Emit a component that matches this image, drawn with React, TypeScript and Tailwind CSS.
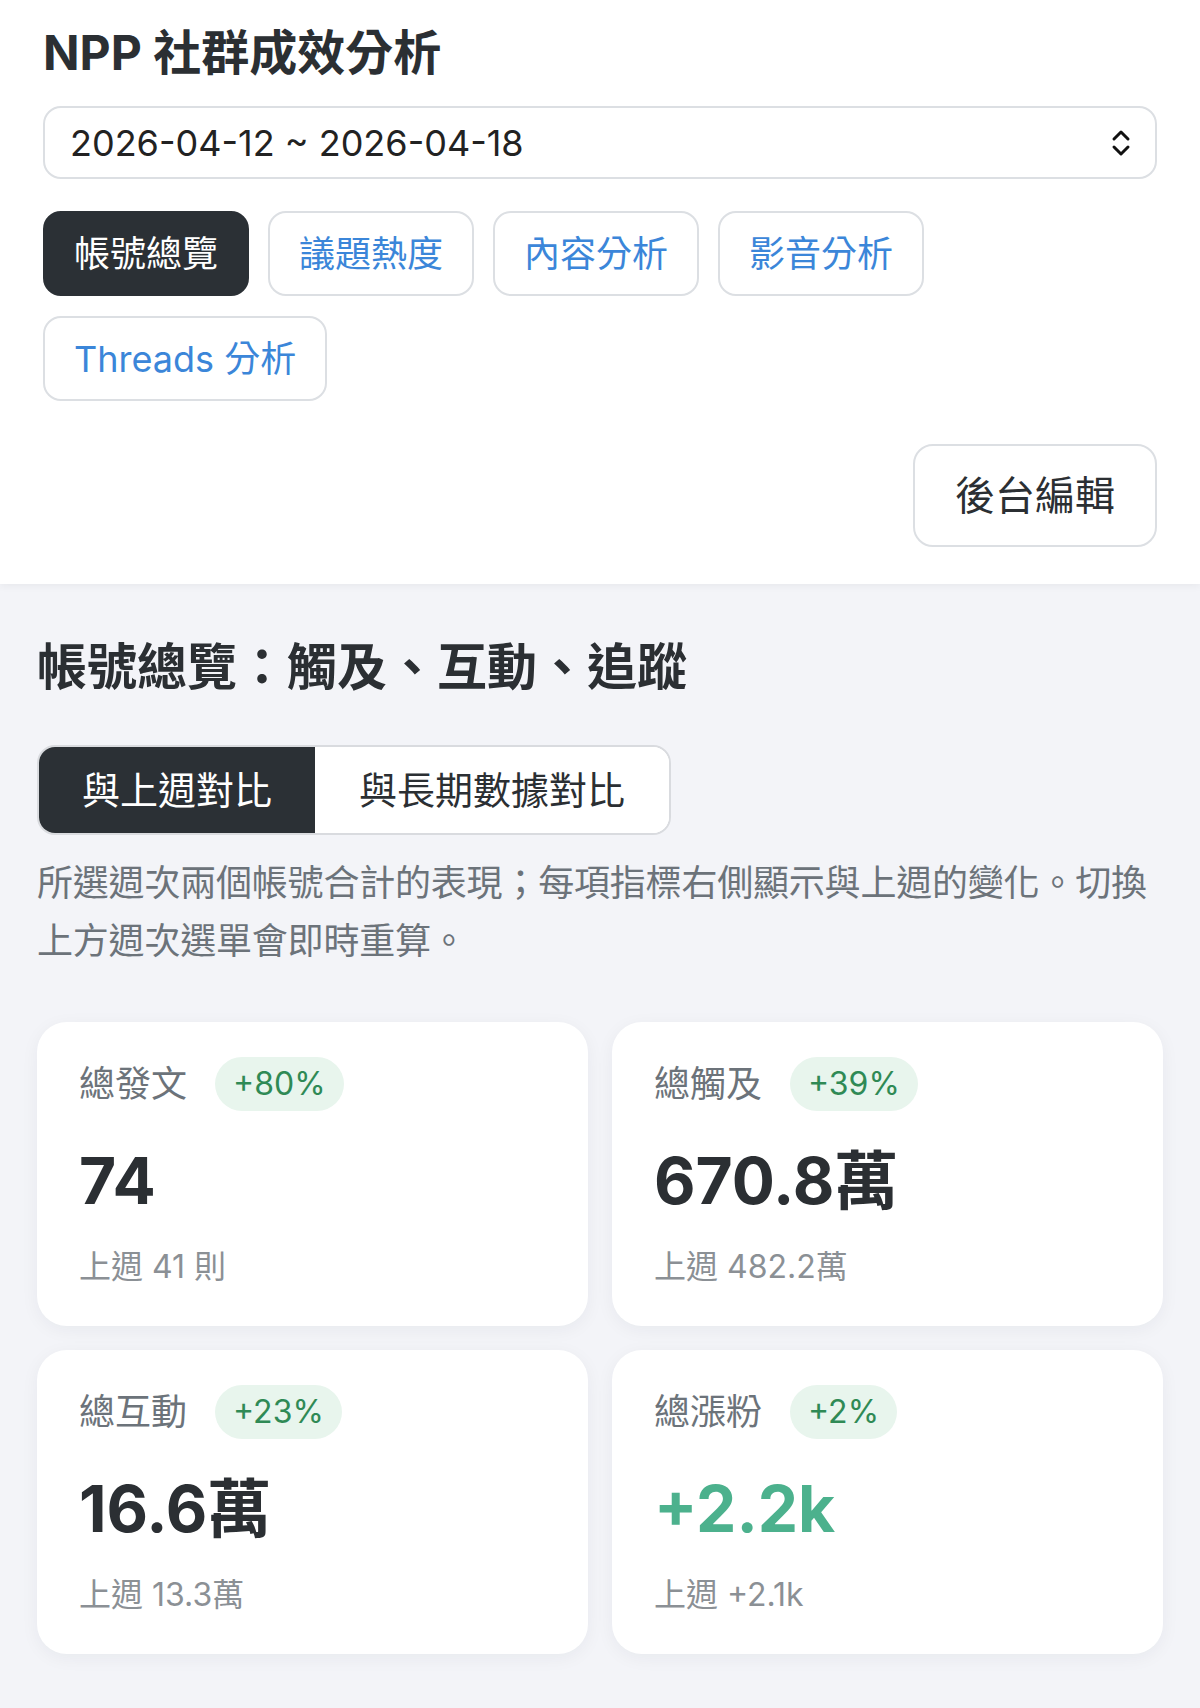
import React from "react";

const FONT = { fontFamily: 'Inter, "Noto Sans CJK TC", "Noto Sans", sans-serif' };

function Chevrons() {
  return (
    <svg width="20" height="28" viewBox="0 0 20 28" fill="none" stroke="#111" strokeWidth="3" strokeLinecap="round" strokeLinejoin="round">
      <path d="M3 10 L10 3 L17 10" />
      <path d="M3 18 L10 25 L17 18" />
    </svg>
  );
}

const tabs = ["帳號總覽", "議題熱度", "內容分析", "影音分析", "Threads 分析"];

type Card = { label: string; badge: string; value: string; sub: string; green?: boolean };
const cards: Card[] = [
  { label: "總發文", badge: "+80%", value: "74", sub: "上週 41 則" },
  { label: "總觸及", badge: "+39%", value: "670.8萬", sub: "上週 482.2萬" },
  { label: "總互動", badge: "+23%", value: "16.6萬", sub: "上週 13.3萬" },
  { label: "總漲粉", badge: "+2%", value: "+2.2k", sub: "上週 +2.1k", green: true },
];

export default function App() {
  return (
    <div style={FONT} className="min-h-[1708px] w-[1200px] bg-[#f3f4f8]">
      <header className="bg-white px-[43px] pt-[24px] pb-[37px] shadow-[0_2px_8px_rgba(0,0,0,0.05)] relative">
        <h1 className="text-[48px] font-bold leading-[58px] text-[#2b2f33]">NPP 社群成效分析</h1>
        <div className="mt-[24px] flex h-[73px] items-center justify-between rounded-[18px] border-2 border-[#dcdfe3] bg-white pl-[25px] pr-[24px]">
          <span className="text-[36px] text-[#222]">2026-04-12 ~ 2026-04-18</span>
          <Chevrons />
        </div>
        <div className="mt-[32px] flex flex-wrap gap-x-[19px] gap-y-[20px]">
          {tabs.map((t, i) => (
            <div
              key={t}
              className={
                i === 0
                  ? "flex h-[85px] items-center rounded-[18px] border-2 border-[#2b3035] bg-[#2b3035] px-[29px] text-[36px] text-white"
                  : "flex h-[85px] items-center rounded-[18px] border-2 border-[#dcdfe3] bg-white px-[29px] text-[36px] text-[#3b86d9]"
              }
            >
              {t}
            </div>
          ))}
        </div>
        <div className="mt-[43px] flex justify-end">
          <div className="flex h-[103px] items-center rounded-[20px] border-2 border-[#dcdfe3] bg-white px-[40px] text-[40px] text-[#2b2f33]">
            後台編輯
          </div>
        </div>
      </header>

      <main className="px-[37px] pt-[50px] pb-[40px]">
        <h2 className="text-[50px] font-bold leading-[66px] text-[#2b2f33]">帳號總覽：觸及、互動、追蹤</h2>
        <div className="mt-[45px] inline-flex h-[90px] overflow-hidden rounded-[18px] border-2 border-[#d9dbdf] bg-white">
          <div className="flex items-center bg-[#2b3035] px-[43px] text-[38px] text-white">與上週對比</div>
          <div className="flex items-center bg-white px-[44px] text-[38px] text-[#2b2f33]">與長期數據對比</div>
        </div>
        <p className="mt-[20px] text-[36px] leading-[57.6px] tracking-[-0.2px] text-[#6c737a]">
          所選週次兩個帳號合計的表現；每項指標右側顯示與上週的變化。切換上方週次選單會即時重算。
        </p>
        <div className="mt-[52px] grid grid-cols-2 gap-[24px]">
          {cards.map((c) => (
            <div key={c.label} className="rounded-[30px] bg-white px-[42px] pt-[35px] pb-[35px] shadow-[0_4px_18px_rgba(20,30,50,0.05)]">
              <div className="flex items-center gap-[28px]">
                <span className="text-[36px] leading-[54px] text-[#6c737a]">{c.label}</span>
                <span className="rounded-full bg-[#e8f5ed] px-[18px] text-[32px] leading-[54px] text-[#2f8a55]">{c.badge}</span>
              </div>
              <div className={"mt-[30px] text-[64px] font-bold leading-[79px] " + (c.green ? "text-[#4cb18d]" : "text-[#2b2f33]")}>
                {c.value}
              </div>
              <div className="mt-[23px] text-[32px] leading-[48px] text-[#8b9095]">{c.sub}</div>
            </div>
          ))}
        </div>
      </main>
    </div>
  );
}
